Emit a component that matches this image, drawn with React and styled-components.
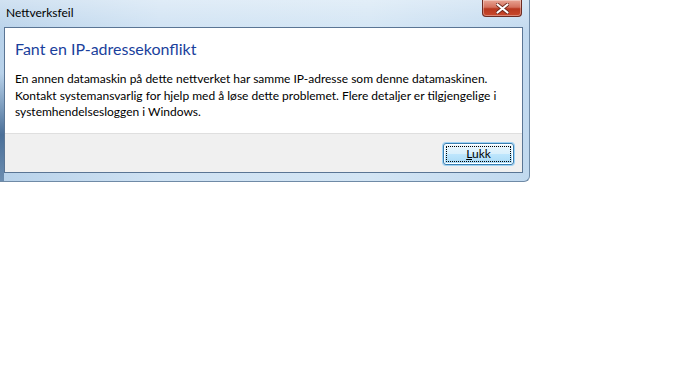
import React from "react";
import styled, { createGlobalStyle } from "styled-components";

const GlobalStyle = createGlobalStyle`
  html, body {
    margin: 0;
    padding: 0;
    background: #ffffff;
  }
  body {
    font-family: "Segoe UI", Lato, "Open Sans", "Liberation Sans", sans-serif;
    font-size: 12px;
  }
`;

const Page = styled.div`
  width: 680px;
  height: 384px;
  background: #ffffff;
`;

const Window = styled.div`
  width: 530px;
  height: 182px;
  box-sizing: border-box;
  display: flex;
  flex-direction: column;
  border-right: 1px solid #6f8aa6;
  border-bottom: 1px solid #6f8aa6;
  border-radius: 0 0 6px 0;
  background:
    linear-gradient(180deg, rgba(255, 255, 255, 0.35) 0%, rgba(255, 255, 255, 0) 18%),
    linear-gradient(90deg, #b8d2ea 0%, #cfe2f3 30%, #d3e5f4 70%, #c1d9ef 100%);
  overflow: hidden;
`;

const TitleBar = styled.div`
  height: 27px;
  display: flex;
  align-items: flex-start;
  justify-content: space-between;
  padding: 0 7px 0 6px;
  flex-shrink: 0;
`;

const Title = styled.span`
  margin-top: 5px;
  font-size: 12px;
  line-height: 16px;
  color: #000000;
`;

const CloseButton = styled.div`
  width: 40px;
  height: 17px;
  box-sizing: border-box;
  display: flex;
  align-items: center;
  justify-content: center;
  border: 1px solid #6d2b22;
  border-top: none;
  border-radius: 0 0 4px 4px;
  background: linear-gradient(180deg, #e8a493 0%, #d4715d 45%, #b8381f 55%, #c9492c 100%);
  box-shadow: inset 0 0 0 1px rgba(255, 255, 255, 0.35);
`;

const Body = styled.div`
  flex: 1;
  display: flex;
  align-items: stretch;
  padding: 0 6px 0 4px;
`;

const Left = styled.div`
  width: 4px;
  margin-left: -4px;
  background: linear-gradient(180deg, rgba(60, 95, 140, 0) 30%, #4a6f98 70%, #6c8db0 100%);
`;

const Panel = styled.div`
  flex: 1;
  display: flex;
  flex-direction: column;
  margin-bottom: 8px;
  border: 1px solid #5a7594;
  background: #ffffff;
`;

const Content = styled.div`
  height: 105px;
  box-sizing: border-box;
  padding: 10px 10px 0 10px;
`;

const Heading = styled.div`
  font-size: 16px;
  line-height: 21px;
  color: #1a3f9c;
  margin-bottom: 12px;
  white-space: nowrap;
`;

const Message = styled.p`
  margin: 0;
  font-size: 12px;
  line-height: 16.5px;
  color: #000000;
  white-space: nowrap;
`;

const Footer = styled.div`
  flex: 1;
  display: flex;
  align-items: center;
  justify-content: flex-end;
  padding: 0 8px 0 9px;
  background: #f0f0f0;
  border-top: 1px solid #dfdfdf;
`;

const Button = styled.button`
  width: 71px;
  height: 22px;
  margin-top: 1px;
  padding: 0;
  font-family: inherit;
  font-size: 12px;
  color: #000000;
  border: 1px solid #3c7fb1;
  border-radius: 3px;
  background: linear-gradient(180deg, #eaf6fd 0%, #d9f0fc 48%, #bee6fd 52%, #a7d9f5 100%);
  box-shadow: 0 0 0 1px #9fd3f5, inset 0 0 0 1px #ffffff;
  position: relative;
  cursor: default;

  &::after {
    content: "";
    position: absolute;
    inset: 2px;
    border: 1px dotted #000000;
    border-radius: 1px;
  }
`;

const AccessKey = styled.span`
  text-decoration: underline;
`;

const CloseGlyph = () => (
  <svg width="13" height="11" viewBox="0 0 13 11">
    <path
      d="M1.5 1.5 L11.5 9.5 M11.5 1.5 L1.5 9.5"
      stroke="#6b2418"
      strokeWidth="3.6"
      strokeLinecap="round"
    />
    <path
      d="M1.5 1.5 L11.5 9.5 M11.5 1.5 L1.5 9.5"
      stroke="#ffffff"
      strokeWidth="2.2"
      strokeLinecap="round"
    />
  </svg>
);

export default function App() {
  return (
    <Page>
      <GlobalStyle />
      <Window>
        <TitleBar>
          <Title>Nettverksfeil</Title>
          <CloseButton>
            <CloseGlyph />
          </CloseButton>
        </TitleBar>
        <Body>
          <Left />
          <Panel>
            <Content>
              <Heading>Fant en IP-adressekonflikt</Heading>
              <Message>
                En annen datamaskin på dette nettverket har samme IP-adresse som denne datamaskinen.
                <br />
                Kontakt systemansvarlig for hjelp med å løse dette problemet. Flere detaljer er tilgjengelige i
                <br />
                systemhendelsesloggen i Windows.
              </Message>
            </Content>
            <Footer>
              <Button>
                <AccessKey>L</AccessKey>ukk
              </Button>
            </Footer>
          </Panel>
        </Body>
      </Window>
    </Page>
  );
}
